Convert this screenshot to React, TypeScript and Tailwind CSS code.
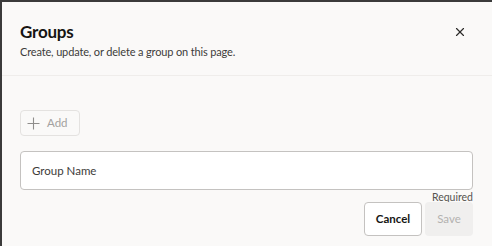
import { X } from "lucide-react";

export default function App() {
  return (
    <div className="h-[246px] w-[492px] overflow-hidden bg-[#3b3b3b] pt-[2px] pl-[2px] font-['Lato','Noto_Sans',sans-serif] text-[#161513]">
      <div className="flex h-full flex-col bg-[#faf9f8]">
        <div className="flex items-start justify-between border-b border-[#efedeb] px-[18px] pt-[20px] pb-[15px]">
          <div>
            <h1 className="text-[17px] font-bold leading-[20px] tracking-[-0.2px]">Groups</h1>
            <p className="mt-[2px] text-[11px] leading-[16px] tracking-[-0.15px] text-[#3d3c3a]">
              Create, update, or delete a group on this page.
            </p>
          </div>
          <button className="mt-[3px] mr-[7px] text-[#2d2c2a]">
            <X size={14} strokeWidth={2} />
          </button>
        </div>

        <div className="flex flex-col px-[18px] pt-[34px]">
          <button className="flex h-[26px] w-[60px] items-center gap-[7px] rounded-[4px] border border-[#e4e2e0] pl-[6px] text-[11.5px] text-[#a3a19f]">
            <svg width="13" height="13" viewBox="0 0 13 13" className="text-[#8f8d8b]">
              <path d="M6.5 0.5V12.5M0.5 6.5H12.5" stroke="currentColor" strokeWidth="1.1" fill="none" />
            </svg>
            Add
          </button>

          <div className="mt-[15px] flex h-[39px] w-[453px] items-center rounded-[4px] border border-[#c4c2c0] bg-white px-[11px] text-[11.5px] text-[#3d3c3a]">
            Group Name
          </div>

          <div className="mt-[1px] w-[453px] text-right text-[10.5px] leading-[13px] text-[#56544f]">
            Required
          </div>

          <div className="mt-[-2px] flex w-[453px] justify-end gap-[3px]">
            <button className="h-[34px] w-[58px] rounded-[4px] border border-[#c4c2c0] bg-white text-[11.5px] font-bold text-[#161513]">
              Cancel
            </button>
            <button className="h-[34px] w-[48px] rounded-[4px] bg-[#f0efee] text-[11.5px] text-[#b4b2b0]">
              Save
            </button>
          </div>
        </div>
      </div>
    </div>
  );
}
